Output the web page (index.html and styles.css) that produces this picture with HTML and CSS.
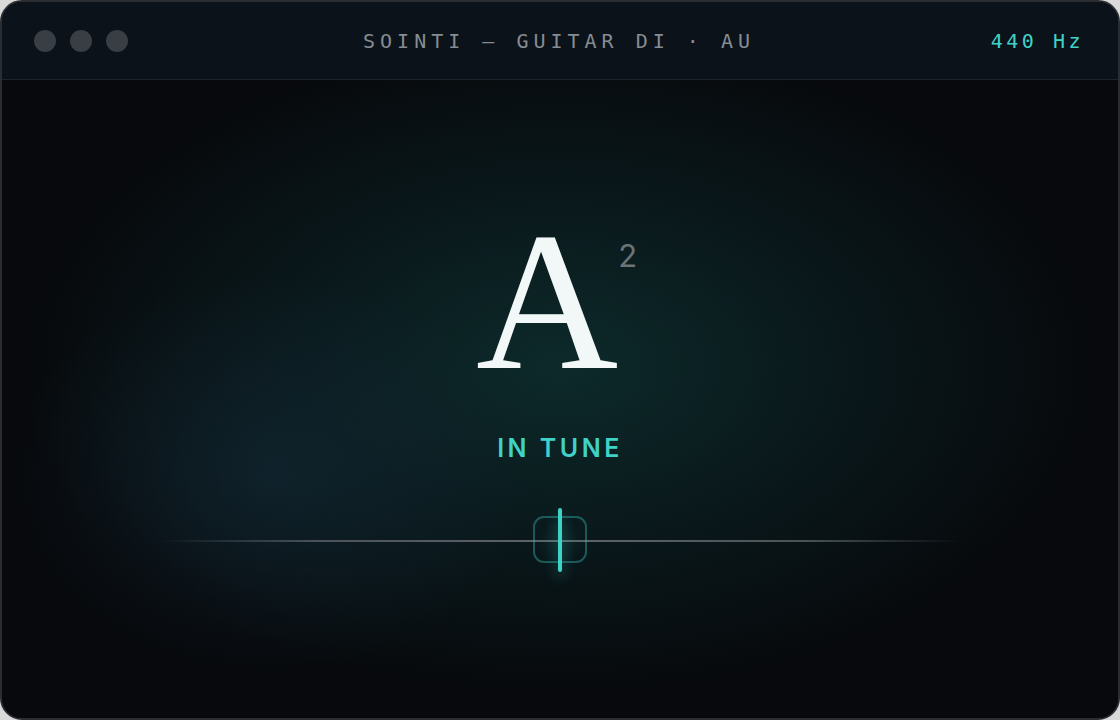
FILE: index.html
```html
<!DOCTYPE html>
<html lang="en">
<head>
  <meta charset="UTF-8" />
  <meta name="viewport" content="width=device-width, initial-scale=1.0" />
  <title>Sointi Tuner</title>
  <link rel="stylesheet" href="styles.css">
</head>
<body>
  <div class="window">
    <div class="titlebar">
      <div class="lights">
        <span class="light"></span>
        <span class="light"></span>
        <span class="light"></span>
      </div>
      <div class="title">SOINTI — GUITAR DI · AU</div>
      <div class="ref">440 Hz</div>
    </div>

    <div class="stage">
      <div class="note">
        <span class="letter">A</span>
        <span class="octave">2</span>
      </div>
      <div class="status">IN TUNE</div>
      <div class="meter">
        <div class="track"></div>
        <div class="target"></div>
        <div class="needle"></div>
      </div>
    </div>
  </div>
</body>
</html>
```

FILE: styles.css
```css
* {
  box-sizing: border-box;
}
body {
  margin: 0;
  background: #d9d9d9;
  font-family: 'Inter', 'Noto Sans', sans-serif;
}
.window {
  width: 1120px;
  height: 720px;
  border: 2px solid #2a2d32;
  border-radius: 22px;
  overflow: hidden;
  display: flex;
  flex-direction: column;
  background: #07090c;
}
.titlebar {
  height: 78px;
  flex-shrink: 0;
  background: #0c1219;
  border-bottom: 1px solid #1d252c;
  display: flex;
  align-items: center;
  justify-content: space-between;
  padding: 0 34px 0 32px;
}
.lights {
  display: flex;
  gap: 14px;
  width: 180px;
}
.light {
  width: 22px;
  height: 22px;
  border-radius: 50%;
  background: #393e45;
}
.title {
  font-family: 'DejaVu Sans Mono', 'Liberation Mono', monospace;
  font-size: 20px;
  letter-spacing: 5px;
  color: #858c93;
}
.ref {
  width: 180px;
  text-align: right;
  font-family: 'DejaVu Sans Mono', 'Liberation Mono', monospace;
  font-size: 20px;
  letter-spacing: 3.5px;
  color: #3fd3c8;
}
.stage {
  flex: 1;
  display: flex;
  flex-direction: column;
  align-items: center;
  padding-top: 137px;
  background:
    radial-gradient(ellipse 260px 200px at 24% 62%, rgba(20, 44, 58, 0.55), transparent),
    radial-gradient(ellipse 540px 330px at 50% 45%, #0d2a2a 0%, #0a1a1d 45%, #07090c 100%);
}
.note {
  display: flex;
  align-items: flex-start;
  margin-left: -7px;
}
.letter {
  font-family: 'Liberation Serif', 'DejaVu Serif', serif;
  font-size: 197px;
  line-height: 170px;
  color: #f2f8f7;
}
.octave {
  font-size: 31px;
  line-height: 1;
  color: #6a7477;
  margin-top: 23px;
}
.status {
  margin-top: 46px;
  font-size: 25px;
  font-weight: 600;
  letter-spacing: 3.5px;
  color: #3fd3c8;
}
.meter {
  position: relative;
  width: 800px;
  height: 66px;
  margin-top: 45px;
}
.track {
  position: absolute;
  left: 0;
  right: 0;
  top: 32px;
  height: 2px;
  background: linear-gradient(90deg, transparent, #4b5359 20%, #5c6469 50%, #4b5359 80%, transparent);
}
.target {
  position: absolute;
  left: 373px;
  top: 8px;
  width: 54px;
  height: 47px;
  border: 2px solid rgba(63, 211, 200, 0.35);
  border-radius: 11px;
  background: radial-gradient(circle at 50% 60%, rgba(63, 211, 200, 0.08), transparent 70%);
}
.needle {
  position: absolute;
  left: 398px;
  top: 0;
  width: 4px;
  height: 64px;
  border-radius: 2px;
  background: #3fd3c8;
  box-shadow: 0 6px 14px rgba(63, 211, 200, 0.45);
}
```
